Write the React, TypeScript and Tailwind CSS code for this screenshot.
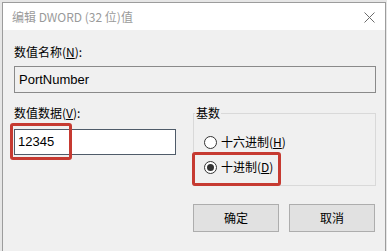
import React from 'react';

const cjk = { fontFamily: '"Noto Sans CJK SC", "Liberation Sans", sans-serif' };
const latin = { fontFamily: '"Liberation Sans", "Noto Sans CJK SC", sans-serif' };

// radio dot for the base group box
const Radio: React.FC<{ checked?: boolean }> = ({ checked }) => (
    <span className="w-[13px] h-[13px] rounded-full border border-[#333333] bg-white flex items-center justify-center shrink-0">
        {checked && <span className="w-[7px] h-[7px] rounded-full bg-[#333333]" />}
    </span>
);

const App: React.FC = () => {
    return (
        <div className="w-[387px] h-[251px] bg-[#e6e6e6] pt-[2px] pl-[2px] pr-[1px] overflow-hidden text-[12px] text-black" style={cjk}>
            <div className="h-full border border-[#9c9c9c] border-b-0 bg-[#f0f0f0] flex flex-col">
                {/* title bar */}
                <div className="h-[27px] bg-white flex items-center justify-between pl-[9px] pr-[10px] shrink-0">
                    <span className="text-[#9a9a9a] leading-[16px]">编辑 DWORD (32 位)值</span>
                    <svg width="11" height="11" viewBox="0 0 11 11" className="mt-[1px]">
                        <path d="M0.5 0.5 L10.5 10.5 M10.5 0.5 L0.5 10.5" stroke="#6b6b6b" strokeWidth="1" fill="none" />
                    </svg>
                </div>

                <div className="pl-[11px] pr-[9px] flex flex-col">
                    <div className="mt-[14px] h-[16px] leading-[16px]">
                        数值名称(<span className="underline">N</span>):
                    </div>
                    <div className="mt-[6px] h-[27px] border border-[#8a8a8a] bg-[#f0f0f0] flex items-center pl-[4px] text-[13px]" style={latin}>
                        PortNumber
                    </div>

                    <div className="mt-[12px] flex gap-[17px]">
                        <div className="w-[162px] flex flex-col">
                            <div className="h-[16px] leading-[16px]">
                                数值数据(<span className="underline">V</span>):
                            </div>
                            <div className="relative mt-[8px] h-[26px] border border-[#4f5b69] bg-white flex items-center pl-[3px] text-[13px]" style={latin}>
                                12345
                                <div className="absolute left-[-5px] top-[-7px] w-[62px] h-[37px] border-[3px] border-[#c63a31] rounded-[3px]" />
                            </div>
                        </div>

                        <fieldset className="w-[183px] border border-[#d9d9d9] pb-[10px]">
                            <legend className="ml-[1px] px-[1px] h-[16px] leading-[16px]">基数</legend>
                            <div className="pl-[10px] flex flex-col">
                                <div className="mt-[13px] h-[16px] flex items-center gap-[4px]">
                                    <Radio />
                                    <span className="leading-[16px]">十六进制(<span className="underline">H</span>)</span>
                                </div>
                                <div className="relative mt-[9px] h-[16px] flex items-center gap-[4px]">
                                    <Radio checked />
                                    <span className="leading-[16px]">十进制(<span className="underline">D</span>)</span>
                                    <div className="absolute left-[-12px] top-[-7px] w-[89px] h-[34px] border-[3px] border-[#c63a31] rounded-[3px]" />
                                </div>
                            </div>
                        </fieldset>
                    </div>

                    <div className="mt-[18px] flex justify-end gap-[10px] pr-[1px]">
                        <button className="w-[86px] h-[28px] bg-[#e1e1e1] border border-[#adadad] leading-[16px]">确定</button>
                        <button className="w-[86px] h-[28px] bg-[#e1e1e1] border border-[#adadad] leading-[16px]">取消</button>
                    </div>
                </div>
            </div>
        </div>
    );
};

export default App;
